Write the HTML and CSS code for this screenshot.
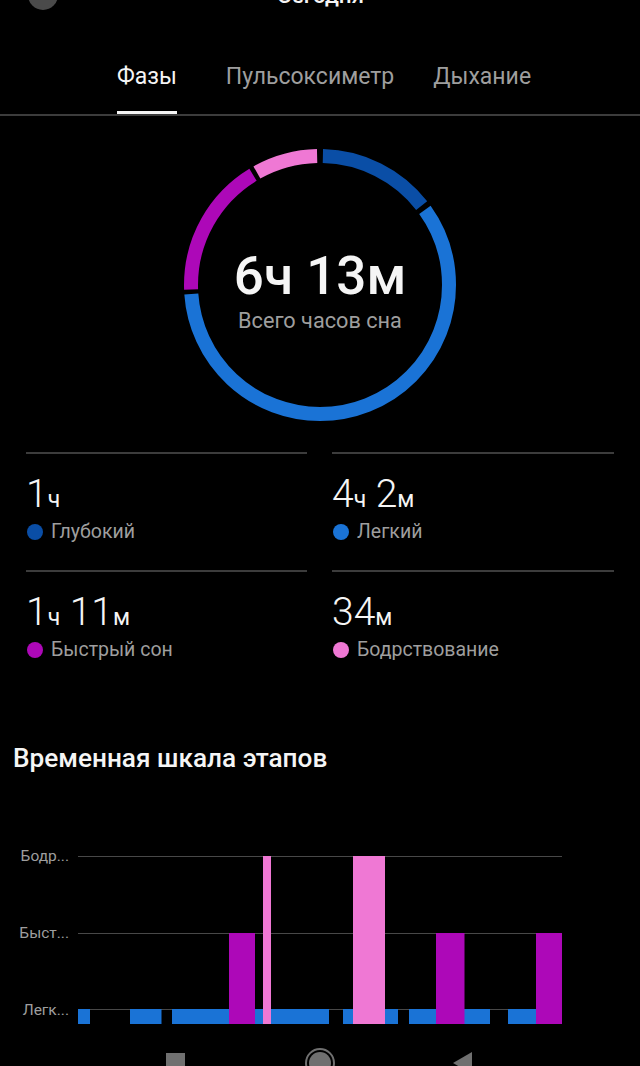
FILE: index.html
```html
<!DOCTYPE html>
<html lang="ru">
<head>
    <meta charset="UTF-8">
    <meta name="viewport" content="width=device-width, initial-scale=1.0">
    <title>Сон</title>
    <link rel="stylesheet" href="styles.css">
</head>
<body>
    <div class="page">
        <header class="topbar">
            <span class="back-button"></span>
            <span class="topbar-title">Сегодня</span>
        </header>

        <nav class="tabs">
            <span class="tab active">Фазы</span>
            <span class="tab tab-middle">Пульсоксиметр</span>
            <span class="tab">Дыхание</span>
        </nav>

        <section class="ring-wrap">
            <svg class="ring" width="272" height="272" viewBox="0 0 272 272">
                <g fill="none" stroke-width="14" transform="rotate(-90 136 136)">
                    <circle class="seg-deep" cx="136" cy="136" r="129" pathLength="360" stroke-dasharray="50.7 309.3" stroke-dashoffset="-1.3" />
                    <circle class="seg-light" cx="136" cy="136" r="129" pathLength="360" stroke-dasharray="211.6 148.4" stroke-dashoffset="-54.4" />
                    <circle class="seg-rem" cx="136" cy="136" r="129" pathLength="360" stroke-dasharray="60.7 299.3" stroke-dashoffset="-268" />
                    <circle class="seg-awake" cx="136" cy="136" r="129" pathLength="360" stroke-dasharray="28 332" stroke-dashoffset="-330.7" />
                </g>
            </svg>
            <div class="ring-text">
                <div class="ring-total">6ч 13м</div>
                <div class="ring-label">Всего часов сна</div>
            </div>
        </section>

        <section class="stats">
            <div class="stat">
                <div class="stat-value">1<small>ч</small></div>
                <div class="stat-label"><span class="dot deep"></span>Глубокий</div>
            </div>
            <div class="stat">
                <div class="stat-value">4<small>ч</small> 2<small>м</small></div>
                <div class="stat-label"><span class="dot light"></span>Легкий</div>
            </div>
            <div class="stat">
                <div class="stat-value">1<small>ч</small> 11<small>м</small></div>
                <div class="stat-label"><span class="dot rem"></span>Быстрый сон</div>
            </div>
            <div class="stat">
                <div class="stat-value">34<small>м</small></div>
                <div class="stat-label"><span class="dot awake"></span>Бодрствование</div>
            </div>
        </section>

        <h2 class="section-title">Временная шкала этапов</h2>

        <section class="chart">
            <div class="chart-labels">
                <span>Бодр...</span>
                <span>Быст...</span>
                <span>Легк...</span>
            </div>
            <svg class="chart-plot" width="484" height="170" viewBox="78 855 484 170">
                <g class="grid">
                    <rect x="78" y="856" width="484" height="1" />
                    <rect x="78" y="933" width="484" height="1" />
                    <rect x="78" y="1009" width="484" height="1" />
                </g>
                <g class="seg-fill-light">
                    <rect x="78" y="1009" width="12" height="15" />
                    <rect x="130" y="1009" width="31.5" height="15" />
                    <rect x="172" y="1009" width="157" height="15" />
                    <rect x="343" y="1009" width="55" height="15" />
                    <rect x="409" y="1009" width="81" height="15" />
                    <rect x="508" y="1009" width="30" height="15" />
                </g>
                <g class="seg-fill-rem">
                    <rect x="229" y="933" width="26" height="91" />
                    <rect x="436" y="933" width="28.5" height="91" />
                    <rect x="536" y="933" width="26" height="91" />
                </g>
                <g class="seg-fill-awake">
                    <rect x="263" y="856" width="8" height="168" />
                    <rect x="353" y="856" width="32" height="168" />
                </g>
            </svg>
        </section>

        <footer class="navbar">
            <span class="nav-square"></span>
            <span class="nav-circle"><span></span></span>
            <svg class="nav-back" width="19" height="22" viewBox="0 0 19 22"><path d="M19 0V22L0 11z" /></svg>
        </footer>
    </div>
</body>
</html>
```

FILE: styles.css
```css
* {
    box-sizing: border-box;
}

body {
    margin: 0;
    background-color: #000;
    font-family: Roboto, 'Noto Sans', sans-serif;
    color: #f5f5f5;
}

.page {
    width: 640px;
    height: 1066px;
    overflow: hidden;
}

.topbar {
    display: flex;
    align-items: center;
    height: 30px;
    margin-top: -20px;
    padding-left: 28px;
}

.back-button {
    width: 30px;
    height: 30px;
    border-radius: 50%;
    background-color: #4a4a4a;
}

.topbar-title {
    margin-left: 219px;
    font-size: 22.5px;
    font-weight: 500;
}

/* tabs */
.tabs {
    display: flex;
    height: 106px;
    padding-top: 50px;
    padding-left: 117px;
    border-bottom: 2px solid #3c3c3c;
    font-size: 23px;
    color: #9e9e9e;
}

.tab {
    height: 54px;
    padding-top: 3px;
    line-height: 27px;
}

.tab-middle {
    margin: 0 39px 0 49px;
}

.tab.active {
    color: #f5f5f5;
    border-bottom: 3px solid #f5f5f5;
}

/* ring */
.ring-wrap {
    position: relative;
    width: 272px;
    height: 272px;
    margin: 33px auto 0;
}

.ring {
    display: block;
}

.seg-deep { stroke: #0a4ea6; }
.seg-light { stroke: #1a73d6; }
.seg-rem { stroke: #ad08b8; }
.seg-awake { stroke: #ef78d4; }

.seg-fill-light { fill: #1a73d6; }
.seg-fill-rem { fill: #ad08b8; }
.seg-fill-awake { fill: #ef78d4; }

.ring-text {
    position: absolute;
    top: 96px;
    left: 0;
    right: 0;
    text-align: center;
}

.ring-total {
    font-size: 53px;
    font-weight: 500;
    line-height: 63px;
}

.ring-label {
    font-size: 21.7px;
    line-height: 26px;
    color: #9e9e9e;
}

/* stats */
.stats {
    display: grid;
    grid-template-columns: 281px 282px;
    column-gap: 25px;
    margin-top: 31px;
    padding-left: 26px;
}

.stat {
    height: 118px;
    border-top: 2px solid #3c3c3c;
    padding-top: 20px;
}

.stat-value {
    font-size: 39px;
    font-weight: 300;
    line-height: 41px;
}

.stat-value small {
    font-size: 23px;
    font-weight: 400;
}

.stat-label {
    display: flex;
    align-items: center;
    font-size: 19.5px;
    line-height: 24px;
    color: #9e9e9e;
}

.dot {
    width: 16px;
    height: 16px;
    margin: 0 8px 0 1px;
    border-radius: 50%;
}

.dot.deep { background-color: #0a4ea6; }
.dot.light { background-color: #1a73d6; }
.dot.rem { background-color: #ad08b8; }
.dot.awake { background-color: #ef78d4; }

/* timeline */
.section-title {
    margin: 55px 0 0 13px;
    font-size: 26.2px;
    font-weight: 500;
    line-height: 31px;
}

.chart {
    display: flex;
    margin-top: 81px;
    height: 170px;
}

.chart-labels {
    display: flex;
    flex-direction: column;
    width: 69px;
    margin-right: 9px;
    margin-top: -9px;
    gap: 57px;
    font-size: 15.5px;
    line-height: 20px;
    text-align: right;
    color: #9e9e9e;
}

.chart-plot {
    display: block;
}

.grid rect {
    fill: #484848;
}

/* android nav bar */
.navbar {
    position: relative;
    height: 30px;
    margin-top: 23px;
}

.nav-square,
.nav-circle,
.nav-back {
    position: absolute;
}

.nav-square {
    left: 166px;
    top: 5px;
    width: 19px;
    height: 19px;
    background-color: #707070;
}

.nav-circle {
    left: 305px;
    top: 0;
    width: 30px;
    height: 30px;
    border: 2px solid #707070;
    border-radius: 50%;
    padding: 2px;
}

.nav-circle span {
    display: block;
    width: 22px;
    height: 22px;
    border-radius: 50%;
    background-color: #707070;
}

.nav-back {
    left: 453px;
    top: 4px;
    fill: #707070;
}
```
